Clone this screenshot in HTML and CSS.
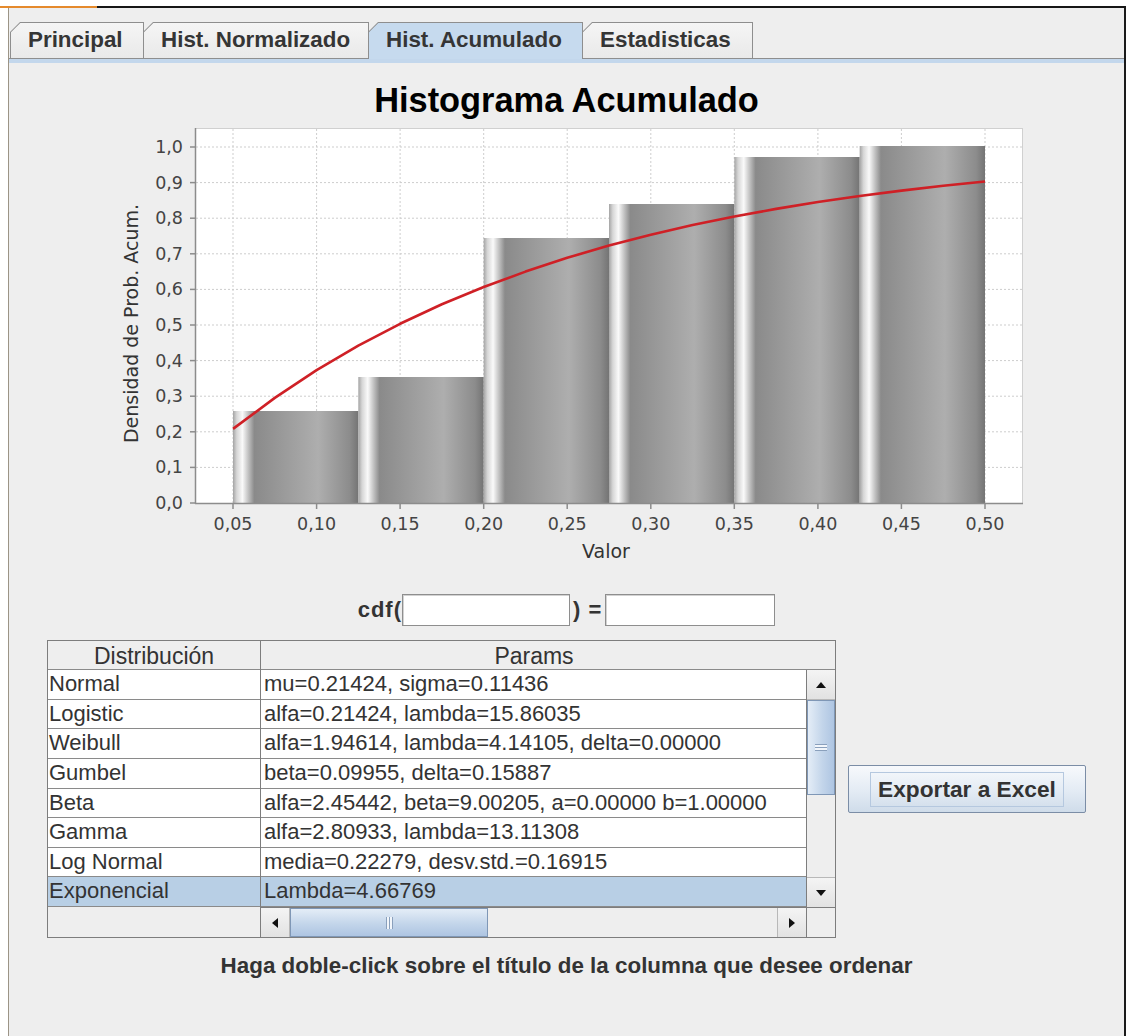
FILE: index.html
```html
<!DOCTYPE html>
<html lang="es">
<head>
<meta charset="utf-8">
<title>Histograma Acumulado</title>
<link rel="stylesheet" href="styles.css">
</head>
<body>
<div class="frame">
  <div class="tabs">
    <div class="tab tab-1"><div class="tab-face">Principal</div></div>
    <div class="tab tab-2"><div class="tab-face">Hist. Normalizado</div></div>
    <div class="tab tab-3 is-active"><div class="tab-face">Hist. Acumulado</div></div>
    <div class="tab tab-4"><div class="tab-face">Estadisticas</div></div>
  </div>
  <div class="tab-band"></div>

  <div class="chart-title">Histograma Acumulado</div>

  <svg class="chart" width="1115" height="450" viewBox="9 120 1115 450" xmlns="http://www.w3.org/2000/svg">
    <defs>
      <linearGradient id="barShade" x1="0" y1="0" x2="1" y2="0">
        <stop offset="0" stop-color="#a4a4a4"/>
        <stop offset="0.03" stop-color="#d6d6d6"/>
        <stop offset="0.075" stop-color="#fafafa"/>
        <stop offset="0.12" stop-color="#c4c4c4"/>
        <stop offset="0.17" stop-color="#8a8a8a"/>
        <stop offset="0.68" stop-color="#aeaeae"/>
        <stop offset="0.93" stop-color="#8c8c8c"/>
        <stop offset="1" stop-color="#747474"/>
      </linearGradient>
    </defs>

    <!-- plot area -->
    <rect x="195.5" y="128.5" width="827" height="375" fill="#ffffff" stroke="#d0d0d0"/>

    <!-- grid -->
    <g stroke="#cdcdcd" stroke-width="1" stroke-dasharray="2 2">
      <line x1="196" y1="467.4" x2="1022" y2="467.4"/>
      <line x1="196" y1="431.8" x2="1022" y2="431.8"/>
      <line x1="196" y1="396.2" x2="1022" y2="396.2"/>
      <line x1="196" y1="360.6" x2="1022" y2="360.6"/>
      <line x1="196" y1="325" x2="1022" y2="325"/>
      <line x1="196" y1="289.4" x2="1022" y2="289.4"/>
      <line x1="196" y1="253.8" x2="1022" y2="253.8"/>
      <line x1="196" y1="218.2" x2="1022" y2="218.2"/>
      <line x1="196" y1="182.6" x2="1022" y2="182.6"/>
      <line x1="196" y1="147" x2="1022" y2="147"/>
      <line x1="233" y1="129" x2="233" y2="503"/>
      <line x1="316.6" y1="129" x2="316.6" y2="503"/>
      <line x1="400.1" y1="129" x2="400.1" y2="503"/>
      <line x1="483.7" y1="129" x2="483.7" y2="503"/>
      <line x1="567.2" y1="129" x2="567.2" y2="503"/>
      <line x1="650.8" y1="129" x2="650.8" y2="503"/>
      <line x1="734.3" y1="129" x2="734.3" y2="503"/>
      <line x1="817.9" y1="129" x2="817.9" y2="503"/>
      <line x1="901.4" y1="129" x2="901.4" y2="503"/>
      <line x1="985" y1="129" x2="985" y2="503"/>
    </g>

    <!-- cumulative frequency bars -->
    <g fill="url(#barShade)">
      <rect x="233" y="411" width="125.33" height="92"/>
      <rect x="358.33" y="377" width="125.34" height="126"/>
      <rect x="483.67" y="238" width="125.33" height="265"/>
      <rect x="609" y="204" width="125.33" height="299"/>
      <rect x="734.33" y="157" width="125.34" height="346"/>
      <rect x="859.67" y="146" width="125.33" height="357"/>
    </g>

    <!-- fitted exponential cdf -->
    <polyline fill="none" stroke="#cf2026" stroke-width="2.6" stroke-linejoin="round"
      points="233,428.9 274.8,397.9 316.6,370.2 358.3,345.6 400.1,323.8 441.9,304.3 483.7,287.0 525.5,271.6 567.2,257.8 609.0,245.6 650.8,234.8 692.6,225.1 734.4,216.5 776.1,208.9 817.9,202.0 859.7,196.0 901.5,190.6 943.3,185.8 985,181.5"/>

    <!-- axes -->
    <g stroke="#8c8c8c" stroke-width="1.5">
      <line x1="195.5" y1="128" x2="195.5" y2="504"/>
      <line x1="195" y1="503.5" x2="1023" y2="503.5"/>
      <line x1="190" y1="503" x2="195" y2="503"/>
      <line x1="190" y1="467.4" x2="195" y2="467.4"/>
      <line x1="190" y1="431.8" x2="195" y2="431.8"/>
      <line x1="190" y1="396.2" x2="195" y2="396.2"/>
      <line x1="190" y1="360.6" x2="195" y2="360.6"/>
      <line x1="190" y1="325" x2="195" y2="325"/>
      <line x1="190" y1="289.4" x2="195" y2="289.4"/>
      <line x1="190" y1="253.8" x2="195" y2="253.8"/>
      <line x1="190" y1="218.2" x2="195" y2="218.2"/>
      <line x1="190" y1="182.6" x2="195" y2="182.6"/>
      <line x1="190" y1="147" x2="195" y2="147"/>
      <line x1="233" y1="504" x2="233" y2="509"/>
      <line x1="316.6" y1="504" x2="316.6" y2="509"/>
      <line x1="400.1" y1="504" x2="400.1" y2="509"/>
      <line x1="483.7" y1="504" x2="483.7" y2="509"/>
      <line x1="567.2" y1="504" x2="567.2" y2="509"/>
      <line x1="650.8" y1="504" x2="650.8" y2="509"/>
      <line x1="734.3" y1="504" x2="734.3" y2="509"/>
      <line x1="817.9" y1="504" x2="817.9" y2="509"/>
      <line x1="901.4" y1="504" x2="901.4" y2="509"/>
      <line x1="985" y1="504" x2="985" y2="509"/>
    </g>

    <g class="tick-label" text-anchor="end">
      <text x="183" y="509">0,0</text>
      <text x="183" y="473.4">0,1</text>
      <text x="183" y="437.8">0,2</text>
      <text x="183" y="402.2">0,3</text>
      <text x="183" y="366.6">0,4</text>
      <text x="183" y="331">0,5</text>
      <text x="183" y="295.4">0,6</text>
      <text x="183" y="259.8">0,7</text>
      <text x="183" y="224.2">0,8</text>
      <text x="183" y="188.6">0,9</text>
      <text x="183" y="153">1,0</text>
    </g>
    <g class="tick-label" text-anchor="middle">
      <text x="233" y="530">0,05</text>
      <text x="316.6" y="530">0,10</text>
      <text x="400.1" y="530">0,15</text>
      <text x="483.7" y="530">0,20</text>
      <text x="567.2" y="530">0,25</text>
      <text x="650.8" y="530">0,30</text>
      <text x="734.3" y="530">0,35</text>
      <text x="817.9" y="530">0,40</text>
      <text x="901.4" y="530">0,45</text>
      <text x="985" y="530">0,50</text>
    </g>
    <text class="axis-label" x="606" y="558" text-anchor="middle">Valor</text>
    <text class="axis-label" x="138" y="323.5" text-anchor="middle" transform="rotate(-90 138 323.5)">Densidad de Prob. Acum.</text>
  </svg>

  <div class="cdf-row">
    <span class="cdf-label">cdf(</span>
    <input class="cdf-input cdf-x" type="text">
    <span class="cdf-label cdf-eq">) =</span>
    <input class="cdf-input cdf-y" type="text">
  </div>

  <div class="table-row">
    <div class="dist-table">
      <div class="fixed-col">
        <div class="th">Distribución</div>
        <div class="td">Normal</div>
        <div class="td">Logistic</div>
        <div class="td">Weibull</div>
        <div class="td">Gumbel</div>
        <div class="td">Beta</div>
        <div class="td">Gamma</div>
        <div class="td">Log Normal</div>
        <div class="td is-selected">Exponencial</div>
        <div class="fixed-fill"></div>
      </div>
      <div class="scroll-col">
        <div class="th th-params">Params</div>
        <div class="scroll-body">
          <div class="viewport">
            <div class="td">mu=0.21424, sigma=0.11436</div>
            <div class="td">alfa=0.21424, lambda=15.86035</div>
            <div class="td">alfa=1.94614, lambda=4.14105, delta=0.00000</div>
            <div class="td">beta=0.09955, delta=0.15887</div>
            <div class="td">alfa=2.45442, beta=9.00205, a=0.00000 b=1.00000</div>
            <div class="td">alfa=2.80933, lambda=13.11308</div>
            <div class="td">media=0.22279, desv.std.=0.16915</div>
            <div class="td is-selected">Lambda=4.66769</div>
          </div>
          <div class="vscroll">
            <div class="sb-btn sb-up"><svg width="12" height="8" viewBox="0 0 12 8"><polygon points="6,1 11,7 1,7" fill="#111"/></svg></div>
            <div class="thumb-v"><span class="grip-v"></span></div>
            <div class="track"></div>
            <div class="sb-btn sb-down"><svg width="12" height="8" viewBox="0 0 12 8"><polygon points="1,1 11,1 6,7" fill="#111"/></svg></div>
          </div>
        </div>
        <div class="hscroll-row">
          <div class="hscroll">
            <div class="sb-btn sb-left"><svg width="8" height="12" viewBox="0 0 8 12"><polygon points="1,6 7,1 7,11" fill="#111"/></svg></div>
            <div class="thumb-h"><span class="grip-h"></span></div>
            <div class="track"></div>
            <div class="sb-btn sb-right"><svg width="8" height="12" viewBox="0 0 8 12"><polygon points="1,1 7,6 1,11" fill="#111"/></svg></div>
          </div>
          <div class="corner"></div>
        </div>
      </div>
    </div>
    <button class="export-btn" type="button"><span class="focus-ring">Exportar a Excel</span></button>
  </div>

  <p class="hint">Haga doble-click sobre el título de la columna que desee ordenar</p>
</div>
</body>
</html>
```

FILE: styles.css
```css
html, body {
  margin: 0;
  padding: 0;
  background: #ffffff;
  overflow: hidden;
}

body {
  font-family: "Liberation Sans", Arial, sans-serif;
  color: #333333;
}

/* window frame */
.frame {
  position: relative;
  margin: 6px 0 0 8px;
  width: 1115px;
  height: 1030px;
  border-top: 2px solid #161616;
  border-left: 1px solid #9c9486;
  border-right: 2px solid #1a1a1a;
  background: #eeeeee;
}

.frame::before {
  content: "";
  position: absolute;
  left: -9px;
  top: -2px;
  width: 97px;
  height: 2px;
  background: #e58a2c;
}

/* tab strip */
.tabs {
  display: flex;
  align-items: flex-start;
  height: 37px;
  margin-top: 14px;
  padding-left: 1px;
  background: linear-gradient(#8e8e8e, #8e8e8e) left bottom / 100% 1px no-repeat;
}

.tab {
  display: flex;
  height: 36px;
  background: #8e8e8e;
  clip-path: polygon(10px 0, 100% 0, 100% 100%, 0 100%, 0 10px);
}

.tab + .tab {
  margin-left: -1px;
}

.tab-1 { width: 134px; }
.tab-2 { width: 226px; }
.tab-3 { width: 215px; }
.tab-4 { width: 171px; }

.tab-face {
  flex: 1;
  margin: 1px 1px 0 1px;
  padding-left: 17px;
  background: linear-gradient(#f5f5f5, #e9e9e9);
  clip-path: polygon(9.3px 0, 100% 0, 100% 100%, 0 100%, 0 9.3px);
  font-weight: bold;
  font-size: 22.4px;
  line-height: 34px;
  color: #353535;
  white-space: nowrap;
}

.tab.is-active {
  height: 37px;
}

.tab.is-active .tab-face {
  background: #c6daee;
}

.tab-band {
  height: 4px;
  background: #c3d7ec;
}

/* chart */
.chart-title {
  box-sizing: border-box;
  height: 57px;
  padding-top: 17px;
  text-align: center;
  font-weight: bold;
  font-size: 34.4px;
  line-height: 40px;
  color: #000000;
}

.chart {
  display: block;
}

.tick-label {
  font-family: "DejaVu Sans", sans-serif;
  font-size: 17.5px;
  fill: #444444;
}

.axis-label {
  font-family: "DejaVu Sans", sans-serif;
  font-size: 19px;
  fill: #333333;
}

/* cdf evaluator */
.cdf-row {
  display: flex;
  justify-content: center;
  align-items: center;
  height: 32px;
  margin-top: 24px;
}

.cdf-label {
  font-weight: bold;
  font-size: 22px;
  letter-spacing: 1px;
  color: #333333;
}

.cdf-eq {
  margin: 0 3px 0 3px;
}

.cdf-input {
  box-sizing: border-box;
  height: 32px;
  margin: 0;
  padding: 0 4px;
  border: 1px solid #8e8e8e;
  box-shadow: inset 1px 1px 0 #d2d2d2;
  background: #ffffff;
  font: 20px "Liberation Sans", Arial, sans-serif;
  outline: none;
}

.cdf-x { width: 168px; }
.cdf-y { width: 170px; }

/* distribution table */
.table-row {
  display: flex;
  align-items: center;
  gap: 12px;
  margin-top: 14px;
  padding-left: 38px;
}

.dist-table {
  box-sizing: border-box;
  display: flex;
  width: 789px;
  height: 298px;
  border: 1px solid #7d7d7d;
  background: #eeeeee;
  font-size: 22px;
  color: #333333;
}

.fixed-col {
  display: flex;
  flex-direction: column;
  width: 212px;
  border-right: 1px solid #7d7d7d;
}

.scroll-col {
  display: flex;
  flex-direction: column;
  flex: 1;
}

.th {
  box-sizing: border-box;
  height: 29px;
  border-bottom: 1px solid #8a8a8a;
  background: #eeeeee;
  text-align: center;
  font-size: 23px;
  line-height: 31px;
  white-space: nowrap;
}

.th-params {
  padding-right: 28px;
}

.td {
  box-sizing: border-box;
  height: 29.625px;
  padding-left: 1px;
  border-bottom: 1px solid #8a8a8a;
  background: #ffffff;
  line-height: 28px;
  white-space: nowrap;
  overflow: hidden;
}

.viewport .td {
  padding-left: 3px;
}

.td.is-selected {
  background: #b8cfe5;
}

.fixed-fill {
  flex: 1;
  background: #eeeeee;
}

.scroll-body {
  display: flex;
  height: 237px;
}

.viewport {
  flex: 1;
  overflow: hidden;
}

/* scrollbars */
.vscroll {
  display: flex;
  flex-direction: column;
  width: 28px;
  border-left: 1px solid #7d7d7d;
  background: #eeeeee;
}

.sb-btn {
  display: flex;
  align-items: center;
  justify-content: center;
  background: linear-gradient(#f4f4f4, #e2e2e2);
}

.sb-up, .sb-down {
  height: 30px;
}

.sb-up { border-bottom: 1px solid #b8b8b8; box-sizing: border-box; }
.sb-down { border-top: 1px solid #b8b8b8; box-sizing: border-box; }

.thumb-v {
  box-sizing: border-box;
  display: flex;
  align-items: center;
  justify-content: center;
  height: 95px;
  border: 1px solid #7f97b6;
  background: linear-gradient(90deg, #e4edf7, #c3d5ea 55%, #aec5e2);
}

.grip-v {
  width: 12px;
  height: 7px;
  background: repeating-linear-gradient(#8aa0bc 0 1px, #f2f6fb 1px 3px);
}

.track {
  flex: 1;
  background: #eeeeee;
}

.hscroll-row {
  display: flex;
  height: 30px;
  border-top: 1px solid #7d7d7d;
  box-sizing: border-box;
}

.hscroll {
  display: flex;
  flex: 1;
}

.sb-left, .sb-right {
  width: 29px;
  box-sizing: border-box;
}

.sb-left { border-right: 1px solid #b8b8b8; }
.sb-right { border-left: 1px solid #b8b8b8; }

.thumb-h {
  box-sizing: border-box;
  display: flex;
  align-items: center;
  justify-content: center;
  width: 198px;
  border: 1px solid #7f97b6;
  background: linear-gradient(#e4edf7, #c3d5ea 55%, #aec5e2);
}

.grip-h {
  width: 7px;
  height: 12px;
  background: repeating-linear-gradient(90deg, #8aa0bc 0 1px, #f2f6fb 1px 3px);
}

.corner {
  width: 28px;
  border-left: 1px solid #7d7d7d;
  background: #eeeeee;
}

/* export button */
.export-btn {
  display: flex;
  align-items: center;
  justify-content: center;
  width: 238px;
  height: 48px;
  padding: 0;
  border: 1px solid #7b8da6;
  border-radius: 2px;
  background: linear-gradient(#f7f9fc, #e3ebf4 55%, #cfdcea);
  font: bold 22.7px "Liberation Sans", Arial, sans-serif;
  color: #333333;
}

.focus-ring {
  padding: 3px 7px;
  border: 1px solid #b5c8df;
}

/* footer hint */
.hint {
  margin: 16px 0 0;
  text-align: center;
  font-weight: bold;
  font-size: 22.4px;
  line-height: 24px;
  color: #333333;
}
```
